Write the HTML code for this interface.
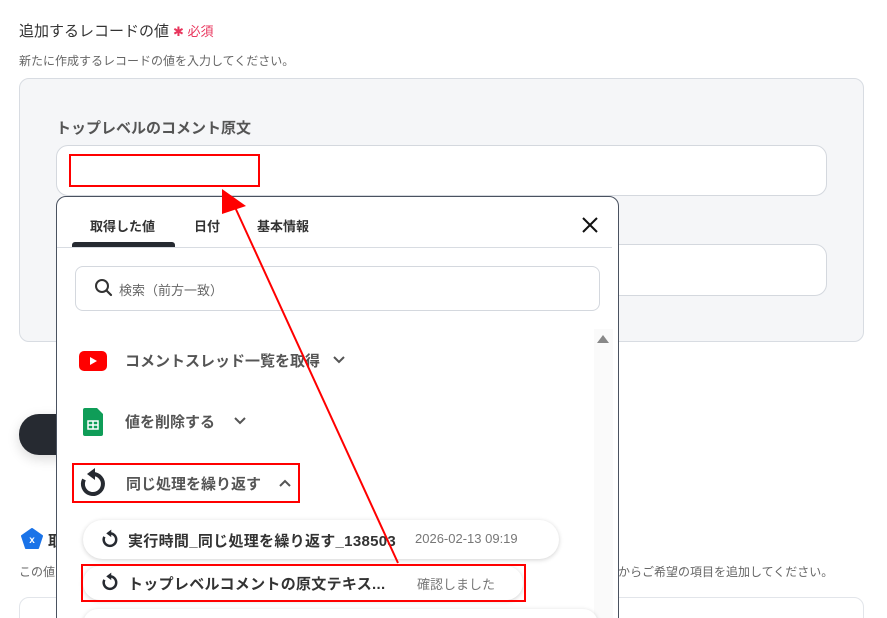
<!DOCTYPE html>
<html style="width:887px;height:618px;overflow:hidden"><head><meta charset="utf-8"><style>
*{margin:0;padding:0;box-sizing:border-box}
body{width:887px;height:618px;overflow:hidden;background:#fff;font-family:"Liberation Sans","Noto Sans CJK JP",sans-serif;position:relative;color:#333}
.a{position:absolute;white-space:nowrap}
.b{font-weight:bold}
</style></head><body>
<div class="a" style="left:19px;top:20px;font-size:15px;color:#333">追加するレコードの値<span style="color:#e8365d;font-size:13px;margin-left:4px">✱ 必須</span></div>
<div class="a" style="left:19px;top:52px;font-size:12px;color:#666">新たに作成するレコードの値を入力してください。</div>
<div class="a" style="left:19px;top:78px;width:845px;height:264px;background:#f5f6f8;border:1px solid #d8dce2;border-radius:10px"></div>
<div class="a b" style="left:56px;top:117px;font-size:15px;color:#555">トップレベルのコメント原文</div>
<div class="a" style="left:56px;top:145px;width:771px;height:51px;background:#fff;border:1px solid #d4d8de;border-radius:12px"></div>
<div class="a" style="left:69px;top:154px;width:191px;height:33px;border:2px solid #f00"></div>
<div class="a" style="left:560px;top:244px;width:267px;height:52px;background:#fff;border:1px solid #d4d8de;border-radius:12px"></div>
<div class="a" style="left:19px;top:414px;width:60px;height:41px;background:#262a31;border-radius:20px;box-shadow:0 4px 12px rgba(0,0,0,.15)"></div>
<svg class="a" style="left:21px;top:528px" width="22" height="22" viewBox="0 0 22 22"><polygon points="11,1 21,8 17,20 5,20 1,8" fill="#1a73e8" stroke="#1a73e8" stroke-width="2" stroke-linejoin="round"/><text x="11" y="15" font-size="10" fill="#fff" text-anchor="middle" font-family="Liberation Sans" font-weight="bold">x</text></svg>
<div class="a b" style="left:48px;top:530px;font-size:15px">取</div>
<div class="a" style="left:19px;top:563px;font-size:12px;color:#666">この値</div>
<div class="a" style="left:618px;top:563px;font-size:12px;color:#666">からご希望の項目を追加してください。</div>
<div class="a" style="left:19px;top:597px;width:845px;height:40px;border:1px solid #e2e5ea;border-radius:10px"></div>

<div class="a" style="left:56px;top:196px;width:563px;height:440px;background:#fff;border:1px solid #4a5260;border-radius:10px"></div>
<div class="a b" style="left:90px;top:216px;font-size:13px;color:#333">取得した値</div>
<div class="a b" style="left:194px;top:216px;font-size:13px;color:#333">日付</div>
<div class="a b" style="left:257px;top:216px;font-size:13px;color:#333">基本情報</div>
<div class="a" style="left:72px;top:242px;width:103px;height:5px;background:#262a31;border-radius:3px 3px 0 0"></div>
<div class="a" style="left:57px;top:247px;width:555px;height:1px;background:#d8dce2"></div>
<svg class="a" style="left:581px;top:216px" width="18" height="18" viewBox="0 0 18 18"><path d="M2 2L16 16M16 2L2 16" stroke="#111" stroke-width="2"/></svg>
<div class="a" style="left:75px;top:266px;width:525px;height:45px;border:1px solid #d4d8de;border-radius:8px"></div>
<svg class="a" style="left:94px;top:278px" width="20" height="20" viewBox="0 0 20 20"><circle cx="8" cy="8" r="6" fill="none" stroke="#333" stroke-width="2"/><path d="M12.5 12.5L17 17" stroke="#333" stroke-width="2.2" stroke-linecap="round"/></svg>
<div class="a" style="left:119px;top:280px;font-size:13px;color:#666">検索（前方一致）</div>
<div class="a" style="left:594px;top:329px;width:19px;height:300px;background:#fafafa"></div>
<svg class="a" style="left:596px;top:334px" width="14" height="10"><polygon points="7,1 13,9 1,9" fill="#888"/></svg>

<svg class="a" style="left:79px;top:351px" width="28" height="20" viewBox="0 0 28 20"><rect width="28" height="20" rx="5" fill="#f00"/><polygon points="11,6 18,10 11,14" fill="#fff"/></svg>
<div class="a b" style="left:125px;top:350px;font-size:15px;color:#555">コメントスレッド一覧を取得</div>
<svg class="a" style="left:332px;top:355px" width="14" height="10"><path d="M2 2L7 7L12 2" fill="none" stroke="#555" stroke-width="2"/></svg>
<svg class="a" style="left:83px;top:408px" width="20" height="28" viewBox="0 0 20 28"><path d="M2 0H14L20 6V26Q20 28 18 28H2Q0 28 0 26V2Q0 0 2 0Z" fill="#0f9d58"/><rect x="5" y="13" width="10" height="8" fill="none" stroke="#fff" stroke-width="1.5"/><path d="M10 13V21M5 17H15" stroke="#fff" stroke-width="1.5"/></svg>
<div class="a b" style="left:125px;top:411px;font-size:15px;color:#555">値を削除する</div>
<svg class="a" style="left:233px;top:416px" width="14" height="10"><path d="M2 2L7 7L12 2" fill="none" stroke="#555" stroke-width="2"/></svg>
<div class="a" style="left:72px;top:463px;width:228px;height:40px;border:2px solid #f00"></div>
<svg class="a" style="left:79px;top:467px" width="28" height="32" viewBox="0 0 28 32"><path d="M14 7A10 10 0 1 1 5 12.5" fill="none" stroke="#262a31" stroke-width="4"/><polygon points="8,7 16,1 16,13" fill="#262a31"/></svg>
<div class="a b" style="left:126px;top:473px;font-size:15px;color:#555">同じ処理を繰り返す</div>
<svg class="a" style="left:278px;top:478px" width="14" height="10"><path d="M2 8L7 3L12 8" fill="none" stroke="#555" stroke-width="2"/></svg>

<div class="a" style="left:83px;top:520px;width:476px;height:39px;background:#fff;border-radius:20px;box-shadow:0 1px 5px rgba(0,0,0,.18)"></div>
<svg class="a" style="left:101px;top:529px" width="18" height="20" viewBox="0 0 28 32"><path d="M14 7A10 10 0 1 1 5 12.5" fill="none" stroke="#262a31" stroke-width="4"/><polygon points="8,7 16,1 16,13" fill="#262a31"/></svg>
<div class="a b" style="left:128px;top:530px;font-size:15px;color:#333;letter-spacing:0.3px">実行時間_同じ処理を繰り返す_138503</div>
<div class="a" style="left:415px;top:531px;font-size:13px;color:#777">2026-02-13 09:19</div>
<div class="a" style="left:83px;top:566px;width:440px;height:34px;background:#fff;border-radius:18px;box-shadow:0 1px 5px rgba(0,0,0,.18)"></div>
<div class="a" style="left:81px;top:564px;width:445px;height:38px;border:2px solid #f00"></div>
<svg class="a" style="left:101px;top:572px" width="18" height="20" viewBox="0 0 28 32"><path d="M14 7A10 10 0 1 1 5 12.5" fill="none" stroke="#262a31" stroke-width="4"/><polygon points="8,7 16,1 16,13" fill="#262a31"/></svg>
<div class="a b" style="left:128px;top:573px;font-size:15px;color:#333;letter-spacing:0.3px">トップレベルコメントの原文テキス...</div>
<div class="a" style="left:417px;top:574px;font-size:13px;color:#777">確認しました</div>
<div class="a" style="left:83px;top:609px;width:515px;height:30px;background:#fff;border-radius:18px;box-shadow:0 1px 5px rgba(0,0,0,.18)"></div>

<svg class="a" style="left:0;top:0" width="887" height="618"><line x1="398" y1="563" x2="234" y2="205" stroke="#f00" stroke-width="2"/><polygon points="222,189 246,206 222,214" fill="#f00"/></svg>
</body></html>
